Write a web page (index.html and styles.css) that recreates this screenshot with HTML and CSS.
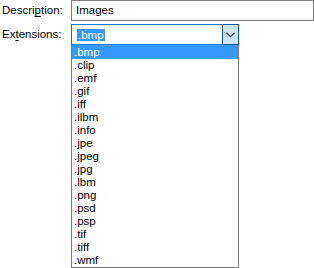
FILE: index.html
```html
<!DOCTYPE html>
<html>
<head>
<meta charset="utf-8">
<link rel="stylesheet" href="styles.css">
</head>
<body>
<div class="form">
  <div class="row r1">
    <label class="lbl">Descri<u>p</u>tion:</label>
    <div class="input">Images</div>
  </div>
  <div class="row r2">
    <label class="lbl">Ex<u>t</u>ensions:</label>
    <div class="combo-wrap">
      <div class="combo">
        <span class="val"><span class="sel">.bmp</span></span>
        <span class="btn"><svg width="9" height="6" viewBox="0 0 9 6"><polyline points="0.5,0.8 4.5,4.6 8.5,0.8" fill="none" stroke="#404040" stroke-width="1.2"/></svg></span>
      </div>
      <ul class="list">
        <li class="on">.bmp</li>
        <li>.clip</li>
        <li>.emf</li>
        <li>.gif</li>
        <li>.iff</li>
        <li>.ilbm</li>
        <li>.info</li>
        <li>.jpe</li>
        <li>.jpeg</li>
        <li>.jpg</li>
        <li>.lbm</li>
        <li>.png</li>
        <li>.psd</li>
        <li>.psp</li>
        <li>.tif</li>
        <li>.tiff</li>
        <li>.wmf</li>
      </ul>
    </div>
  </div>
</div>
</body>
</html>
```
FILE: styles.css
```css
html, body {
  margin: 0;
  padding: 0;
  background: #ffffff;
}
body {
  font-family: "Liberation Sans", Arial, sans-serif;
  font-size: 11.5px;
  color: #000000;
}
.form {
  display: flex;
  flex-direction: column;
  gap: 3px;
}
.row {
  display: flex;
  align-items: flex-start;
}
.lbl {
  width: 69px;
  padding-left: 2px;
  height: 21px;
  line-height: 20px;
  flex: none;
}
.lbl u {
  text-decoration-thickness: 1px;
  text-underline-offset: 2px;
}
.input {
  width: 237px;
  height: 19px;
  border: 1px solid #7a7a7a;
  line-height: 19px;
  padding-left: 4px;
}
.combo-wrap {
  display: flex;
  flex-direction: column;
  width: 168px;
}
.combo {
  display: flex;
  height: 19px;
  border: 1px solid #0078d7;
}
.val {
  flex: 1;
  display: flex;
  align-items: center;
  padding-left: 5px;
}
.sel {
  background: #3399ff;
  color: #ffffff;
  height: 12px;
  line-height: 12px;
  padding: 0 1px;
}
.btn {
  width: 15px;
  margin: -1px -1px -1px 0;
  border: 1px solid #005499;
  background: #cce4f7;
  display: flex;
  align-items: center;
  justify-content: center;
}
.list {
  list-style: none;
  margin: 0;
  padding: 0;
  border: 1px solid #7a7a7a;
  border-top: none;
  display: flex;
  flex-direction: column;
}
.list li {
  height: 13px;
  line-height: 13px;
  padding-left: 2px;
}
.list li.on {
  background: #3399ff;
  color: #ffffff;
  height: 14px;
  line-height: 14px;
}
```
